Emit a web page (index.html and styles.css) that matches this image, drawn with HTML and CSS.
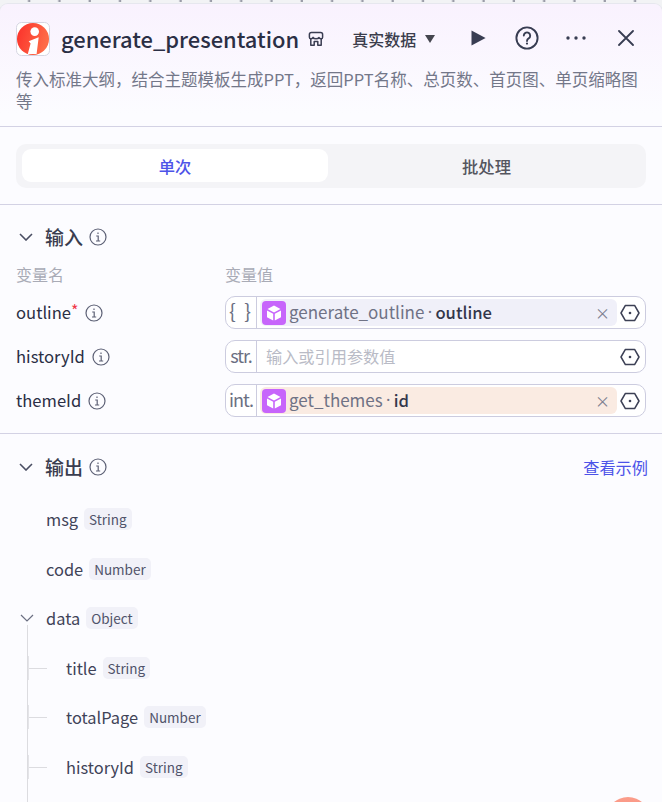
FILE: index.html
```html
<!DOCTYPE html>
<html lang="en">
  <head>
    <meta charset="UTF-8" />
    <meta name="viewport" content="width=device-width, initial-scale=1.0" />
    <title>generate_presentation</title>
    <link rel="stylesheet" href="styles.css">
  </head>
  <body>
    <div class="canvas-dots"></div>
    <div class="panel">
      <header class="head">
        <div class="title-row">
          <svg class="logo" width="34" height="34" viewBox="0 0 34 34">
            <defs>
              <linearGradient id="logoFill" x1="0" y1="0" x2="1" y2="0.3">
                <stop offset="0" stop-color="#fb2f2a" />
                <stop offset="1" stop-color="#fe6b47" />
              </linearGradient>
            </defs>
            <rect x="0.5" y="0.5" width="33" height="33" rx="5" fill="#fff" stroke="#d5d6e2" />
            <circle cx="17" cy="17" r="16" fill="url(#logoFill)" />
            <circle cx="18.7" cy="9.6" r="4.3" fill="#fff" />
            <path d="M12.7 19.3 L22.7 15.3 L20.6 32 L11.8 32 L14.6 21.5 Z" fill="#fff" />
          </svg>
          <h1 class="title">generate_presentation</h1>
          <svg class="store" width="16" height="16" viewBox="0 0 16 16" fill="none" stroke="#3a3d52" stroke-width="1.5" stroke-linejoin="round">
            <path d="M3.4 1.6 H12.6 Q14.6 1.6 14.6 3.6 V6.2 Q14.6 7.8 13 7.8 Q11.2 7.8 11 6.4 Q10.4 7.8 8 7.8 Q5.6 7.8 5 6.4 Q4.8 7.8 3 7.8 Q1.4 7.8 1.4 6.2 V3.6 Q1.4 1.6 3.4 1.6 Z" />
            <path d="M2.8 8 V14.2 H6.2 V10.6 H9.8 V14.2 H13.2 V8" />
          </svg>
          <div class="mode">真实数据<span class="caret"></span></div>
          <svg class="tool play" width="18" height="18" viewBox="0 0 18 18"><path d="M2.5 1.6 L16.6 9 L2.5 16.4 Z" fill="#383d52" /></svg>
          <svg class="tool help" width="24" height="24" viewBox="0 0 24 24" fill="none" stroke="#383d52" stroke-width="1.9">
            <circle cx="12" cy="12" r="10.6" />
            <path d="M8.8 9.6 A3.2 3.2 0 1 1 13.6 12.4 C12.4 13.1 12 13.6 12 15" stroke-linecap="round" />
            <circle cx="12" cy="17.6" r="1.1" fill="#383d52" stroke="none" />
          </svg>
          <svg class="tool more" width="22" height="6" viewBox="0 0 22 6"><circle cx="3" cy="3" r="1.7" fill="#383d52" /><circle cx="11" cy="3" r="1.7" fill="#383d52" /><circle cx="19" cy="3" r="1.7" fill="#383d52" /></svg>
          <svg class="tool close" width="16" height="16" viewBox="0 0 16 16" fill="none" stroke="#383d52" stroke-width="1.8" stroke-linecap="round"><path d="M1 1 L15 15 M15 1 L1 15" /></svg>
        </div>
        <p class="desc">传入标准大纲，结合主题模板生成PPT，返回PPT名称、总页数、首页图、单页缩略图等</p>
      </header>

      <section class="tabs-wrap">
        <div class="tabs">
          <div class="tab active">单次</div>
          <div class="tab">批处理</div>
        </div>
      </section>

      <section class="inputs">
        <div class="sec-head">
          <svg class="chev" width="14" height="8" viewBox="0 0 14 8" fill="none" stroke="#4a4e63" stroke-width="1.6"><path d="M1 1 L7 7 L13 1" /></svg>
          <span class="sec-title">输入</span>
          <svg class="info" width="18" height="18" viewBox="0 0 18 18" fill="none" stroke="#5c6075" stroke-width="1.2"><circle cx="9" cy="9" r="8" /><path d="M7.2 8 H9.2 V13 M7 13 H11.2 M9 4.6 V6" /></svg>
        </div>
        <div class="var-grid">
          <div class="col-label">变量名</div>
          <div class="col-label">变量值</div>

          <div class="var-name">outline<span class="req">*</span>
            <svg class="info" width="18" height="18" viewBox="0 0 18 18" fill="none" stroke="#5c6075" stroke-width="1.2"><circle cx="9" cy="9" r="8" /><path d="M7.2 8 H9.2 V13 M7 13 H11.2 M9 4.6 V6" /></svg>
          </div>
          <div class="var-box">
            <span class="type type-obj">{ }</span>
            <div class="ref ref-blue">
              <svg class="cube" width="24" height="24" viewBox="0 0 24 24"><rect width="24" height="24" rx="4" fill="#c765fb" /><path d="M12 4.5 L18.5 8 L12 11.5 L5.5 8 Z M5 9.4 L11.2 12.8 V19.6 L5 16.2 Z M19 9.4 L12.8 12.8 V19.6 L19 16.2 Z" fill="#fff" /></svg>
              <span class="ref-node">generate_outline</span><span class="ref-dot">·</span><span class="ref-key">outline</span>
              <span class="ref-x">×</span>
            </div>
            <svg class="hex" width="20" height="18" viewBox="0 0 20 18" fill="none" stroke="#3c4055" stroke-width="1.5" stroke-linejoin="round"><path d="M5.4 1.4 H14.6 L19 9 L14.6 16.6 H5.4 L1 9 Z" /><circle cx="10" cy="9" r="1.3" fill="#3c4055" stroke="none" /></svg>
          </div>

          <div class="var-name">historyId
            <svg class="info" width="18" height="18" viewBox="0 0 18 18" fill="none" stroke="#5c6075" stroke-width="1.2"><circle cx="9" cy="9" r="8" /><path d="M7.2 8 H9.2 V13 M7 13 H11.2 M9 4.6 V6" /></svg>
          </div>
          <div class="var-box">
            <span class="type">str.</span>
            <div class="ref ref-empty">输入或引用参数值</div>
            <svg class="hex" width="20" height="18" viewBox="0 0 20 18" fill="none" stroke="#3c4055" stroke-width="1.5" stroke-linejoin="round"><path d="M5.4 1.4 H14.6 L19 9 L14.6 16.6 H5.4 L1 9 Z" /><circle cx="10" cy="9" r="1.3" fill="#3c4055" stroke="none" /></svg>
          </div>

          <div class="var-name">themeId
            <svg class="info" width="18" height="18" viewBox="0 0 18 18" fill="none" stroke="#5c6075" stroke-width="1.2"><circle cx="9" cy="9" r="8" /><path d="M7.2 8 H9.2 V13 M7 13 H11.2 M9 4.6 V6" /></svg>
          </div>
          <div class="var-box">
            <span class="type">int.</span>
            <div class="ref ref-orange">
              <svg class="cube" width="24" height="24" viewBox="0 0 24 24"><rect width="24" height="24" rx="4" fill="#c765fb" /><path d="M12 4.5 L18.5 8 L12 11.5 L5.5 8 Z M5 9.4 L11.2 12.8 V19.6 L5 16.2 Z M19 9.4 L12.8 12.8 V19.6 L19 16.2 Z" fill="#fff" /></svg>
              <span class="ref-node">get_themes</span><span class="ref-dot">·</span><span class="ref-key">id</span>
              <span class="ref-x">×</span>
            </div>
            <svg class="hex" width="20" height="18" viewBox="0 0 20 18" fill="none" stroke="#3c4055" stroke-width="1.5" stroke-linejoin="round"><path d="M5.4 1.4 H14.6 L19 9 L14.6 16.6 H5.4 L1 9 Z" /><circle cx="10" cy="9" r="1.3" fill="#3c4055" stroke="none" /></svg>
          </div>
        </div>
      </section>

      <section class="outputs">
        <div class="sec-head">
          <svg class="chev" width="14" height="8" viewBox="0 0 14 8" fill="none" stroke="#4a4e63" stroke-width="1.6"><path d="M1 1 L7 7 L13 1" /></svg>
          <span class="sec-title">输出</span>
          <svg class="info" width="18" height="18" viewBox="0 0 18 18" fill="none" stroke="#5c6075" stroke-width="1.2"><circle cx="9" cy="9" r="8" /><path d="M7.2 8 H9.2 V13 M7 13 H11.2 M9 4.6 V6" /></svg>
          <a class="sample">查看示例</a>
        </div>
        <ul class="tree">
          <li class="leaf"><span class="name">msg</span><span class="tag">String</span></li>
          <li class="leaf"><span class="name">code</span><span class="tag">Number</span></li>
          <li class="leaf parent">
            <svg class="tree-chev" width="14" height="8" viewBox="0 0 14 8" fill="none" stroke="#6b6f82" stroke-width="1.2"><path d="M1 1 L7 7 L13 1" /></svg>
            <span class="name">data</span><span class="tag">Object</span>
          </li>
          <li class="kids">
            <ul class="kid-list">
              <li class="leaf kid"><span class="name">title</span><span class="tag">String</span></li>
              <li class="leaf kid"><span class="name">totalPage</span><span class="tag">Number</span></li>
              <li class="leaf kid"><span class="name">historyId</span><span class="tag">String</span></li>
            </ul>
          </li>
        </ul>
      </section>
      <div class="float-dot"></div>
    </div>
  </body>
</html>
```

FILE: styles.css
```css
* {
  box-sizing: border-box;
}
html,
body {
  height: 100%;
}
body {
  margin: 0;
  overflow: hidden;
  background-color: #f2f3f5;
  font-family: "Noto Sans CJK SC", "Noto Sans", sans-serif;
  color: #383d52;
}
.canvas-dots {
  height: 4px;
  background-image: radial-gradient(circle at 29px 1px, #9a9ca8 1px, transparent 1.4px);
  background-size: 30.3px 4px;
}
.panel {
  position: relative;
  height: 798px;
  overflow: hidden;
  border-top-left-radius: 8px;
  border-top-right-radius: 8px;
  background: linear-gradient(180deg, #f9f2fe 0, #fcfcff 110px);
  box-shadow: 0 0 0 1px #e6e7ee;
}

/* header */
.head {
  height: 123px;
  padding: 17px 16px 0;
  border-bottom: 1px solid #d3d2e4;
}
.title-row {
  display: flex;
  align-items: center;
  height: 36px;
}
.logo {
  flex: none;
}
.title {
  margin: 0 0 0 11px;
  font-size: 21.9px;
  font-weight: 500;
  line-height: 36px;
  white-space: nowrap;
  color: #2b2f45;
}
.store {
  margin-left: 9px;
  flex: none;
}
.mode {
  display: flex;
  align-items: center;
  margin-left: 28px;
  font-size: 16px;
  font-weight: 500;
  white-space: nowrap;
  color: #3b3d4c;
}
.caret {
  width: 0;
  height: 0;
  margin-left: 9px;
  border-left: 5.5px solid transparent;
  border-right: 5.5px solid transparent;
  border-top: 8px solid #45464f;
}
.tool {
  flex: none;
  margin-bottom: 2px;
}
.play {
  margin-left: 34px;
}
.help {
  margin-left: 28px;
}
.more {
  margin-left: 26px;
}
.close {
  margin-left: 31px;
}
.desc {
  margin: 11px 0 0;
  font-size: 16.5px;
  line-height: 22px;
  color: #737789;
}

/* tabs */
.tabs-wrap {
  height: 78px;
  padding: 17px 16px 0;
  border-bottom: 1px solid #d3d2e4;
}
.tabs {
  display: flex;
  height: 44px;
  padding: 5px 6px 6px;
  border-radius: 10px;
  background-color: #f4f4f7;
}
.tab {
  flex: 1;
  display: flex;
  align-items: center;
  justify-content: center;
  padding-left: 5px;
  border-radius: 9px;
  font-size: 16.3px;
  font-weight: 500;
  color: #55565f;
}
.tab.active {
  flex: none;
  width: 306px;
  padding-left: 0;
  background-color: #fff;
  color: #4d53e8;
}

/* section headers */
.sec-head {
  display: flex;
  align-items: center;
  height: 24px;
}
.chev {
  margin-left: 3px;
  flex: none;
}
.sec-title {
  margin-left: 12px;
  margin-bottom: 2px;
  font-size: 19px;
  font-weight: 500;
  color: #3a3d4f;
}
.sec-head .info {
  margin-left: 6px;
}
.sample {
  margin-left: auto;
  margin-right: -2px;
  font-size: 16.2px;
  color: #4d53e8;
}

/* inputs */
.inputs {
  height: 229px;
  padding: 20px 16px 0;
  border-bottom: 1px solid #d3d2e4;
}
.var-grid {
  display: grid;
  grid-template-columns: 209px 1fr;
  grid-auto-rows: 33px;
  row-gap: 11px;
  margin-top: 3px;
}
.col-label {
  align-self: start;
  padding-top: 9px;
  font-size: 16px;
  line-height: 26px;
  color: #a9abb6;
}
.var-name {
  display: flex;
  align-items: center;
  padding-bottom: 2px;
  font-size: 16.6px;
  color: #2b2f45;
}
.var-name .info {
  margin-left: 7px;
  margin-top: 2px;
}
.req {
  align-self: flex-start;
  margin-top: 2px;
  color: #f0384a;
  font-size: 16px;
}
.var-box {
  display: flex;
  align-items: center;
  height: 33px;
  border: 1px solid #ccccdf;
  border-radius: 10px;
  background-color: #fff;
}
.type {
  flex: none;
  width: 31px;
  height: 100%;
  border-right: 1px solid #ccccdf;
  font-size: 18px;
  line-height: 28px;
  text-align: center;
  letter-spacing: -1px;
  color: #6b6f82;
}
.type-obj {
  font-size: 20px;
  letter-spacing: 2px;
}
.ref {
  flex: 1;
  display: flex;
  align-items: center;
  min-width: 0;
  height: 27px;
  margin-left: 3px;
  padding-left: 2px;
  padding-bottom: 2px;
  border-radius: 6px;
  font-size: 16.6px;
  white-space: nowrap;
}
.ref-blue {
  background-color: #f0f0f9;
}
.ref-orange {
  background-color: #faebe2;
}
.ref-empty {
  margin-left: 0;
  padding-left: 9px;
  font-size: 16.2px;
  color: #b9bbc6;
}
.cube {
  flex: none;
  margin-right: 3px;
  margin-top: 2px;
}
.ref-node {
  font-size: 17px;
  color: #6f7285;
}
.ref-dot {
  width: 11px;
  overflow: hidden;
  font-family: "Noto Sans", sans-serif;
  text-align: center;
  color: #6f7285;
}
.ref-key {
  font-weight: 500;
  color: #33364a;
}
.ref-x {
  margin-left: auto;
  margin-right: 7px;
  margin-top: 2px;
  font-size: 15px;
  color: #7b7e8e;
}
.hex {
  flex: none;
  margin: 0 5px 0 3px;
}

/* outputs */
.outputs {
  padding: 21px 16px 0;
}
.tree {
  margin: 0;
  padding: 0;
  list-style: none;
}
.kids {
  margin-top: -18px;
}
.kid-list {
  margin: 0 0 0 11px;
  padding: 18px 0 40px;
  list-style: none;
  border-left: 1px solid #dcdce0;
}
.leaf {
  display: flex;
  align-items: center;
  height: 49.5px;
  padding-left: 30px;
  font-size: 16.4px;
}
.tree > .leaf:first-child {
  margin-top: 15.3px;
}
.parent {
  position: relative;
}
.tree-chev {
  position: absolute;
  left: 4px;
  top: 21px;
}
.kid {
  position: relative;
  padding-left: 38px;
}
.kid::before {
  content: "";
  position: absolute;
  left: 0;
  top: 50%;
  width: 19px;
  border-top: 1px solid #dcdce0;
}
.kid::after {
  content: "";
  position: absolute;
  left: 0;
  top: calc(50% - 12px);
  width: 1px;
  height: 24px;
  background-color: #e4e4e8;
}
.name {
  color: #3f4358;
}
.tag {
  margin-left: 6px;
  padding: 0 5px;
  height: 22px;
  border-radius: 5px;
  background-color: #f1f1f8;
  font-size: 13.5px;
  line-height: 22px;
  color: #50536a;
}
.float-dot {
  position: absolute;
  right: 12px;
  top: 793px;
  width: 44px;
  height: 44px;
  border-radius: 50%;
  background: linear-gradient(180deg, #fb9e8c, #f97a62);
}
```
